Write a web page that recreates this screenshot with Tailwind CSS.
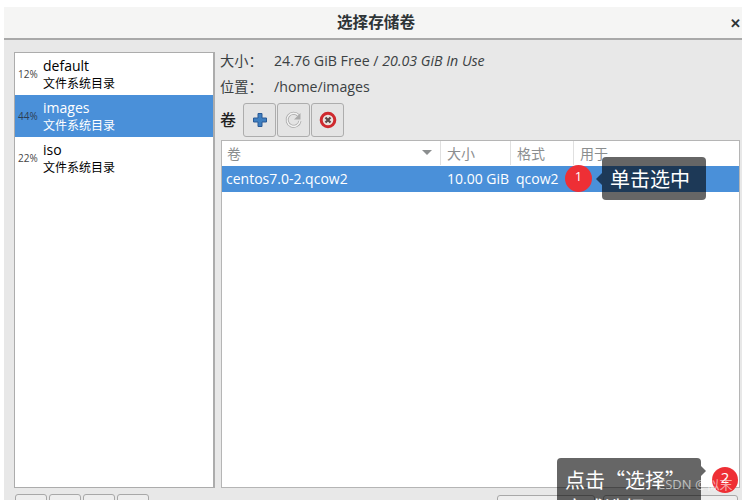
<!DOCTYPE html>
<html><head><meta charset="utf-8"><script src="https://cdn.jsdelivr.net/npm/@tailwindcss/browser@4"></script></head>
<body class="bg-white overflow-hidden">
<div class="relative w-[742px] h-[500px] overflow-hidden bg-white pl-[4px] pt-[7px] text-[#2e3436] font-['Open_Sans','Noto_Sans_CJK_SC',sans-serif]">
  <div class="w-[738px] h-[493px] bg-[#e8e8e8] flex flex-col overflow-hidden">
    <div class="h-[33px] shrink-0 bg-[#f5f5f4] border-b-2 border-[#a9a9a9] flex items-center relative">
      <div class="w-full text-center text-[15.6px] font-bold pl-[6px]">选择存储卷</div>
      <div class="absolute right-[1px] top-[7px] text-[13px] font-bold leading-[18px]">✕</div>
    </div>
    <div class="flex pt-[12px] pl-[10px] gap-[5px]">
      <div class="w-[201px] shrink-0 flex flex-col">
        <div class="h-[436px] bg-white border border-[#acacac] border-r-2 flex flex-col">
          <div class="h-[42px] flex items-center pl-[3px] text-black">
            <div class="w-[25px] text-[10px] text-[#444]">12%</div>
            <div><div class="text-[14px] leading-[18px] font-normal">default</div><div class="text-[12px] leading-[17px]">文件系统目录</div></div>
          </div>
          <div class="h-[42px] flex items-center pl-[3px] bg-[#4a90d9] text-white">
            <div class="w-[25px] text-[10px] text-[#2e3f55]">44%</div>
            <div><div class="text-[14px] leading-[18px]">images</div><div class="text-[12px] leading-[17px]">文件系统目录</div></div>
          </div>
          <div class="h-[42px] flex items-center pl-[3px] text-black">
            <div class="w-[25px] text-[10px] text-[#444]">22%</div>
            <div><div class="text-[14px] leading-[18px]">iso</div><div class="text-[12px] leading-[17px]">文件系统目录</div></div>
          </div>
        </div>
        <div class="flex gap-[2px] mt-[6px] pl-[1px]">
          <div class="w-[32px] h-[20px] bg-[#eeeeee] border border-[#a8a8a8] rounded-t-[3px]"></div>
          <div class="w-[32px] h-[20px] bg-[#eeeeee] border border-[#a8a8a8] rounded-t-[3px]"></div>
          <div class="w-[32px] h-[20px] bg-[#eeeeee] border border-[#a8a8a8] rounded-t-[3px]"></div>
          <div class="w-[32px] h-[20px] bg-[#eeeeee] border border-[#a8a8a8] rounded-t-[3px]"></div>
        </div>
      </div>
      <div class="flex-1 min-w-0 flex flex-col">
        <div class="flex h-[19px] items-center text-[14.2px] text-[#3b4143] mt-[-1px]"><span class="w-[54px]">大小：</span><span>24.76 GiB Free / <i>20.03 GiB In Use</i></span></div>
        <div class="flex h-[19px] items-center text-[14.2px] text-[#3b4143] mt-[7px]"><span class="w-[54px]">位置：</span><span>/home/images</span></div>
        <div class="flex items-center mt-[7px] h-[34px]">
          <span class="w-[22px] text-[16px] font-medium text-[#222]">卷</span>
          <div class="flex gap-px pl-px">
            <div class="w-[33px] h-[34px] bg-[#e4e4e4] border border-[#adadad] rounded-[3px] flex items-center justify-center">
              <svg width="16" height="16" viewBox="0 0 16 16"><path d="M6 1.500h4v4.500h4.500v4H10v4.500H6V10H1.500V6H6z" fill="#3f7fc0" stroke="#2a5a96" stroke-width="1"/></svg>
            </div>
            <div class="w-[33px] h-[34px] bg-[#e4e4e4] border border-[#adadad] rounded-[3px] flex items-center justify-center">
              <svg width="20" height="20" viewBox="0 0 20 20" fill="none"><path d="M14.500 5.500A6.500 6.500 0 1 0 16 11" stroke="#a8a8a8" stroke-width="3"/><path d="M14.500 5.500A6.500 6.500 0 1 0 16 11" stroke="#f2f2f2" stroke-width="1.400"/><path d="M16.500 3v6.500H10z" fill="#ababab"/></svg>
            </div>
            <div class="w-[33px] h-[34px] bg-[#e4e4e4] border border-[#adadad] rounded-[3px] flex items-center justify-center">
              <svg width="20" height="20" viewBox="0 0 20 20" fill="none"><circle cx="10" cy="10" r="6.800" fill="#e9e3e0" stroke="#cf2a2f" stroke-width="3"/><path d="M7.500 7.500l5 5M12.500 7.500l-5 5" stroke="#5b4a48" stroke-width="2.200"/></svg>
            </div>
          </div>
        </div>
        <div class="mt-[3px] ml-[1px] w-[519px] h-[348px] bg-white border border-[#b5b5b5] flex flex-col">
          <div class="h-[25px] flex text-[14px] text-[#8b8e8f] shrink-0 pb-px">
            <div class="w-[219px] pl-[5px] border-r border-[#e0e0e0] flex items-center justify-between pr-[8px]"><span>卷</span><svg width="10" height="6" viewBox="0 0 10 6"><path d="M0 0h10L5 5z" fill="#8b8e8f"/></svg></div>
            <div class="w-[70px] pl-[6px] border-r border-[#e0e0e0] flex items-center">大小</div>
            <div class="w-[63px] pl-[6px] border-r border-[#e0e0e0] flex items-center">格式</div>
            <div class="flex-1 pl-[6px] flex items-center">用于</div>
          </div>
          <div class="h-[26px] bg-[#4a90d9] text-white text-[14px] flex items-center shrink-0 pb-px">
            <div class="w-[219px] pl-[4px]">centos7.0-2.qcow2</div>
            <div class="w-[70px] pl-[6px]">10.00 GiB</div>
            <div class="pl-[5px]">qcow2</div>
          </div>
        </div>
        <div class="flex mt-[7px] pl-[277px] gap-[8px]">
          <div class="w-[98px] h-[20px] bg-[#eeeeee] border border-[#a8a8a8] rounded-t-[3px]"></div>
          <div class="w-[135px] h-[20px] bg-[#eeeeee] border border-[#a8a8a8] rounded-t-[3px]"></div>
        </div>
      </div>
    </div>
  </div>

  <div class="absolute left-[565px] top-[165px] w-[27px] h-[27px] rounded-full bg-[#ee2f35] text-white text-[13px] flex items-center justify-center pb-[4px]">1</div>
  <div class="absolute left-[596px] top-[173px] w-0 h-0 border-y-[6px] border-y-transparent border-r-[6px] border-r-[#1c3a5c]"></div>
  <div class="absolute left-[602px] top-[157px] w-[104px] h-[43px] rounded-[4px] bg-black/60 flex items-center pl-[8px]">
    <span class="text-[20px] text-white font-['Noto_Sans_CJK_SC',sans-serif]">单击选中</span>
  </div>

  <div class="absolute left-[557px] top-[458px] w-[144px] h-[42px] rounded-t-[4px] bg-black/60 overflow-hidden pl-[8px] pt-[8px] text-white text-[20px] leading-[28px] font-['Noto_Sans_CJK_SC',sans-serif]">点击“选择”<br>完成选择</div>
  <div class="absolute left-[701px] top-[466px] w-0 h-0 border-y-[5px] border-y-transparent border-l-[5px] border-l-[#666]"></div>
  <div class="absolute left-[712px] top-[467px] w-[26px] h-[26px] rounded-full bg-[#ee2f35] text-white text-[15px] flex items-center justify-center pb-[5px]">2</div>
  <div class="absolute left-[657px] top-[475px] text-[13px] leading-[18px] text-white/60">CSDN @似末</div>
</div>
</body></html>
